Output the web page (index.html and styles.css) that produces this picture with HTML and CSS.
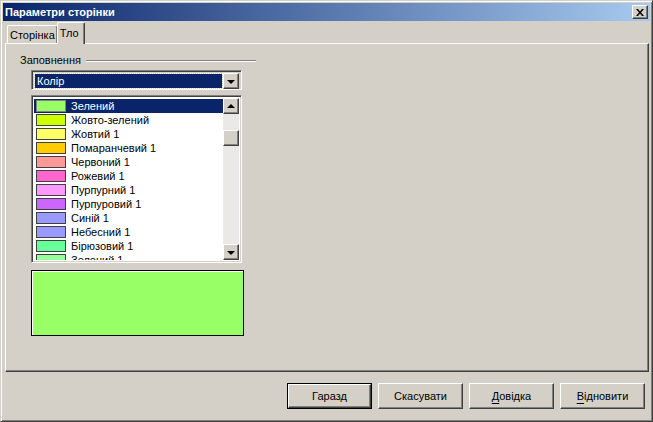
FILE: index.html
```html
<!doctype html>
<html lang="uk">
<head>
	<meta charset="UTF-8" />
	<title>Параметри сторінки</title>
<link rel="stylesheet" href="styles.css">
</head>
<body>
	<section id="dialog">
		<header class="titlebar">
			<span class="caption">Параметри сторінки</span>
			<a href="javascript:;" class="close raised">
				<svg width="8" height="7" viewBox="0 0 8 7"><path d="M0 0L2 0L4 2.5L6 0L8 0L5 3.5L8 7L6 7L4 4.5L2 7L0 7L3 3.5Z" fill="#000"/></svg>
			</a>
		</header>
		<nav class="tabs">
			<a href="javascript:;">Сторінка</a>
			<a href="javascript:;" class="active">Тло</a>
		</nav>
		<div class="panel">
			<div class="legend">
				<span>Заповнення</span>
				<i></i>
			</div>
			<div class="combo sunken">
				<div class="value"><span>Колір</span></div>
				<a href="javascript:;" class="btn raised"><b class="down"></b></a>
			</div>
			<div class="list sunken">
				<ul>
					<li class="active"><em style="background:#99ff66"></em>Зелений</li>
					<li><em style="background:#ccff00"></em>Жовто-зелений</li>
					<li><em style="background:#ffff66"></em>Жовтий 1</li>
					<li><em style="background:#ffcc00"></em>Помаранчевий 1</li>
					<li><em style="background:#ff9999"></em>Червоний 1</li>
					<li><em style="background:#ff66cc"></em>Рожевий 1</li>
					<li><em style="background:#ff99ff"></em>Пурпурний 1</li>
					<li><em style="background:#cc66ff"></em>Пурпуровий 1</li>
					<li><em style="background:#9999ff"></em>Синій 1</li>
					<li><em style="background:#9999ff"></em>Небесний 1</li>
					<li><em style="background:#66ff99"></em>Бірюзовий 1</li>
					<li><em style="background:#99ff99"></em>Зелений 1</li>
				</ul>
				<div class="scroll">
					<a href="javascript:;" class="btn raised"><b class="up"></b></a>
					<div class="track"><span class="thumb raised"></span></div>
					<a href="javascript:;" class="btn raised"><b class="down"></b></a>
				</div>
			</div>
			<div class="preview"></div>
		</div>
		<footer class="buttons">
			<a href="javascript:;" class="default"><span class="raised">Гаразд</span></a>
			<a href="javascript:;"><span class="raised">Скасувати</span></a>
			<a href="javascript:;"><span class="raised"><u>Д</u>овідка</span></a>
			<a href="javascript:;"><span class="raised"><u>В</u>ідновити</span></a>
		</footer>
	</section>
</body>
</html>
```

FILE: styles.css
```css
*{
	margin: 0;
	padding: 0;
	box-sizing: border-box;
}
body{
	background: #d4d0c8;
	font-family: "Liberation Sans", Arial, sans-serif;
	font-size: 11px;
	color: #000;
}
a{
	color: #000;
	text-decoration: none;
}
.raised{
	border: 1px solid;
	border-color: #fff #404040 #404040 #fff;
	box-shadow: inset -1px -1px #808080, inset 1px 1px #d4d0c8;
	background: #d4d0c8;
}
.sunken{
	border: 1px solid;
	border-color: #808080 #fff #fff #808080;
	box-shadow: inset 1px 1px #404040, inset -1px -1px #d4d0c8;
}
#dialog{
	width: 653px;
	height: 422px;
	display: flex;
	flex-direction: column;
	padding: 2px;
	border: 1px solid;
	border-color: #d4d0c8 #404040 #404040 #d4d0c8;
	box-shadow: inset 1px 1px #fff, inset -1px -1px #808080;
}
.titlebar{
	height: 18px;
	display: flex;
	align-items: center;
	justify-content: space-between;
	padding: 0 2px 0 2px;
	background: linear-gradient(to right, #0a246a, #a6caf0);
}
.caption{
	color: #fff;
	font-weight: bold;
	font-size: 11px;
}
.close{
	width: 16px;
	height: 14px;
	display: flex;
	align-items: center;
	justify-content: center;
}
.tabs{
	height: 23px;
	padding: 2px 0 0 4px;
	display: flex;
	align-items: flex-end;
	position: relative;
	z-index: 1;
}
.tabs a{
	height: 18px;
	padding: 3px 2px 0 2px;
	border-top: 1px solid #fff;
	border-left: 1px solid #fff;
	border-right: 1px solid #404040;
	box-shadow: inset -1px 0 #808080;
	border-radius: 2px 2px 0 0;
	margin-bottom: 1px;
}
.tabs a.active{
	height: 22px;
	padding: 4px 5px 0 2px;
	margin: 0 0 0 -1px;
	background: #d4d0c8;
}
.panel{
	height: 329px;
	margin: -1px 1px 0 2px;
	padding: 10px 0 0 14px;
	border: 1px solid;
	border-color: #fff #404040 #404040 #fff;
	box-shadow: inset -1px -1px #808080;
}
.legend{
	display: flex;
	align-items: center;
	width: 236px;
	height: 12px;
}
.legend i{
	flex: 1;
	height: 2px;
	margin: 1px 0 0 5px;
	border-top: 1px solid #808080;
	border-bottom: 1px solid #fff;
}
.combo{
	width: 211px;
	height: 20px;
	margin: 4px 0 0 11px;
	padding: 2px;
	display: flex;
}
.combo .value{
	flex: 1;
	padding: 1px;
}
.combo .value span{
	display: block;
	height: 14px;
	background: #0a246a;
	color: #fff;
	outline: 1px dotted #fff;
	padding: 1px 0 0 2px;
	line-height: 13px;
}
.btn{
	width: 16px;
	height: 16px;
	display: flex;
	align-items: center;
	justify-content: center;
}
b.down, b.up{
	width: 0;
	height: 0;
	border-left: 4px solid transparent;
	border-right: 4px solid transparent;
}
b.down{
	border-top: 4px solid #000;
	margin-top: 1px;
}
b.up{
	border-bottom: 4px solid #000;
	margin-top: -1px;
}
.list{
	width: 211px;
	height: 168px;
	margin: 5px 0 0 11px;
	padding: 2px;
	background: #fff;
	display: flex;
}
.list ul{
	flex: 1;
	list-style: none;
	overflow: hidden;
	padding: 1px 0 0 0;
}
.list li{
	height: 14px;
	line-height: 14px;
	display: flex;
	align-items: center;
	white-space: nowrap;
}
.list li.active{
	background: #0a246a;
	color: #fff;
}
.list li em{
	width: 30px;
	height: 12px;
	margin: 0 5px 0 2px;
	border: 1px solid #404040;
}
.list li.active em{
	border-color: #808080;
}
.scroll{
	width: 16px;
	display: flex;
	flex-direction: column;
	background: #ebe9e5;
}
.track{
	flex: 1;
	padding-top: 16px;
}
.thumb{
	display: block;
	height: 16px;
}
.preview{
	width: 213px;
	height: 66px;
	margin: 7px 0 0 11px;
	background: #99ff66;
	border: 1px solid #000;
	box-shadow: inset 1px 1px #fff;
}
.buttons{
	flex: 1;
	display: flex;
	justify-content: flex-end;
	gap: 6px;
	padding: 11px 5px 0 0;
}
.buttons a{
	width: 85px;
	height: 26px;
	display: block;
}
.buttons a span{
	display: flex;
	align-items: center;
	justify-content: center;
	height: 100%;
}
.buttons a.default{
	border: 1px solid #000;
}
.buttons u{
	text-decoration: underline;
	text-decoration-skip-ink: none;
	text-underline-offset: 3px;
}
```
